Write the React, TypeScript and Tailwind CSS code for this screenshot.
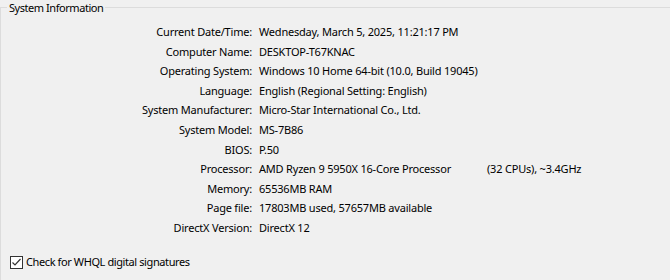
import React from "react";

const rows: [string, React.ReactNode][] = [
  ["Current Date/Time:", "Wednesday, March 5, 2025, 11:21:17 PM"],
  ["Computer Name:", "DESKTOP-T67KNAC"],
  ["Operating System:", "Windows 10 Home 64-bit (10.0, Build 19045)"],
  ["Language:", "English (Regional Setting: English)"],
  ["System Manufacturer:", "Micro-Star International Co., Ltd."],
  ["System Model:", "MS-7B86"],
  ["BIOS:", "P.50"],
  [
    "Processor:",
    <span className="flex">
      <span className="w-[228px] shrink-0">AMD Ryzen 9 5950X 16-Core Processor</span>
      <span>(32 CPUs), ~3.4GHz</span>
    </span>,
  ],
  ["Memory:", "65536MB RAM"],
  ["Page file:", "17803MB used, 57657MB available"],
  ["DirectX Version:", "DirectX 12"],
];

export default function App() {
  return (
    <div
      className="w-[670px] h-[280px] bg-[#f0f0f0] text-[#000000] text-[11px] tracking-[-0.2px] overflow-hidden"
      style={{ fontFamily: '"Noto Sans", sans-serif' }}
    >
      <fieldset className="border-l border-t border-[#dcdcdc] w-[700px] h-[300px] m-0 p-0">
        <legend className="ml-[6px] px-[2px] leading-[15px] tracking-[-0.45px]">System Information</legend>
        <div className="grid grid-cols-[251px_1fr] gap-x-[7px] pt-[7px]">
          {rows.map(([label, value], i) => (
            <React.Fragment key={i}>
              <div className="h-[19.6px] leading-[19.6px] text-right whitespace-nowrap">{label}</div>
              <div className="h-[19.6px] leading-[19.6px] whitespace-nowrap">{value}</div>
            </React.Fragment>
          ))}
        </div>
        <div className="flex items-center mt-[15px] ml-[9px] h-[19px]">
          <span className="w-[13px] h-[13px] border border-[#333333] bg-white flex items-center justify-center">
            <svg width="11" height="11" viewBox="0 0 11 11">
              <path d="M1.5 5.5 L4 8 L9.5 2" fill="none" stroke="#333333" strokeWidth="1.2" />
            </svg>
          </span>
          <span className="ml-[3px] tracking-[-0.4px]">Check for WHQL digital signatures</span>
        </div>
      </fieldset>
    </div>
  );
}
